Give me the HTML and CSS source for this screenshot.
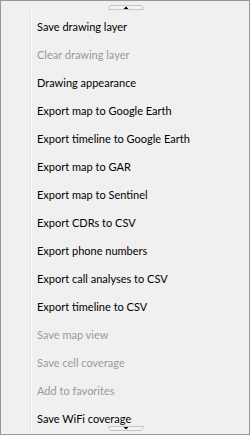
FILE: index.html
```html
<!DOCTYPE html>
<html lang="en">
<head>
    <meta charset="UTF-8">
    <meta name="viewport" content="width=device-width, initial-scale=1.0">
    <title>Menu</title>
    <link rel="stylesheet" href="styles.css">
</head>
<body>
    <div class="menu">
        <!-- scroll up arrow -->
        <svg class="scroll scroll-up" width="36" height="7" viewBox="0 0 36 7">
            <path d="M2.5 1.5 H33.5 L35.5 5.5 H0.5 Z" fill="#f4f4f4" stroke="#c6c6c6"/>
            <path d="M15.5 5 L18 2.5 L20.5 5 Z" fill="#000"/>
        </svg>

        <div class="viewport">
            <ul class="items">
                <li class="item">Save drawing layer</li>
                <li class="item disabled">Clear drawing layer</li>
                <li class="item">Drawing appearance</li>
                <li class="item">Export map to Google Earth</li>
                <li class="item">Export timeline to Google Earth</li>
                <li class="item">Export map to GAR</li>
                <li class="item">Export map to Sentinel</li>
                <li class="item">Export CDRs to CSV</li>
                <li class="item">Export phone numbers</li>
                <li class="item">Export call analyses to CSV</li>
                <li class="item">Export timeline to CSV</li>
                <li class="item disabled">Save map view</li>
                <li class="item disabled">Save cell coverage</li>
                <li class="item disabled">Add to favorites</li>
                <li class="item">Save WiFi coverage</li>
            </ul>
        </div>

        <!-- scroll down arrow -->
        <svg class="scroll scroll-down" width="36" height="7" viewBox="0 0 36 7">
            <path d="M0.5 1.5 H35.5 L33.5 5.5 H2.5 Z" fill="#f4f4f4" stroke="#c6c6c6"/>
            <path d="M15.5 2 L20.5 2 L18 4.5 Z" fill="#000"/>
        </svg>
    </div>
</body>
</html>
```

FILE: styles.css
```css
body {
    margin: 0;
    padding: 0;
    background: #f0f0f0;
}
.menu {
    position: relative;
    width: 250px;
    height: 435px;
    box-sizing: border-box;
    border: 1px solid #979797;
    background: #f0f0f0;
    font-family: Lato, "Noto Sans", sans-serif;
    font-size: 11px;
    color: #000;
    overflow: hidden;
}
.viewport {
    margin-top: 10px;
    margin-left: 29px;
    height: 420px;
    overflow: hidden;
    border-left: 1px solid #e2e3e3;
    box-shadow: inset 1px 0 0 #fff;
}
.items {
    list-style: none;
    margin: 0;
    padding: 2px 0 0 0;
}
.item {
    height: 28px;
    line-height: 28px;
    padding-left: 6px;
    white-space: nowrap;
}
.item.disabled {
    color: #9a9a9a;
}
.scroll {
    position: absolute;
    left: 107px;
    display: block;
}
.scroll-up {
    top: 3px;
}
.scroll-down {
    top: 424px;
}
```
